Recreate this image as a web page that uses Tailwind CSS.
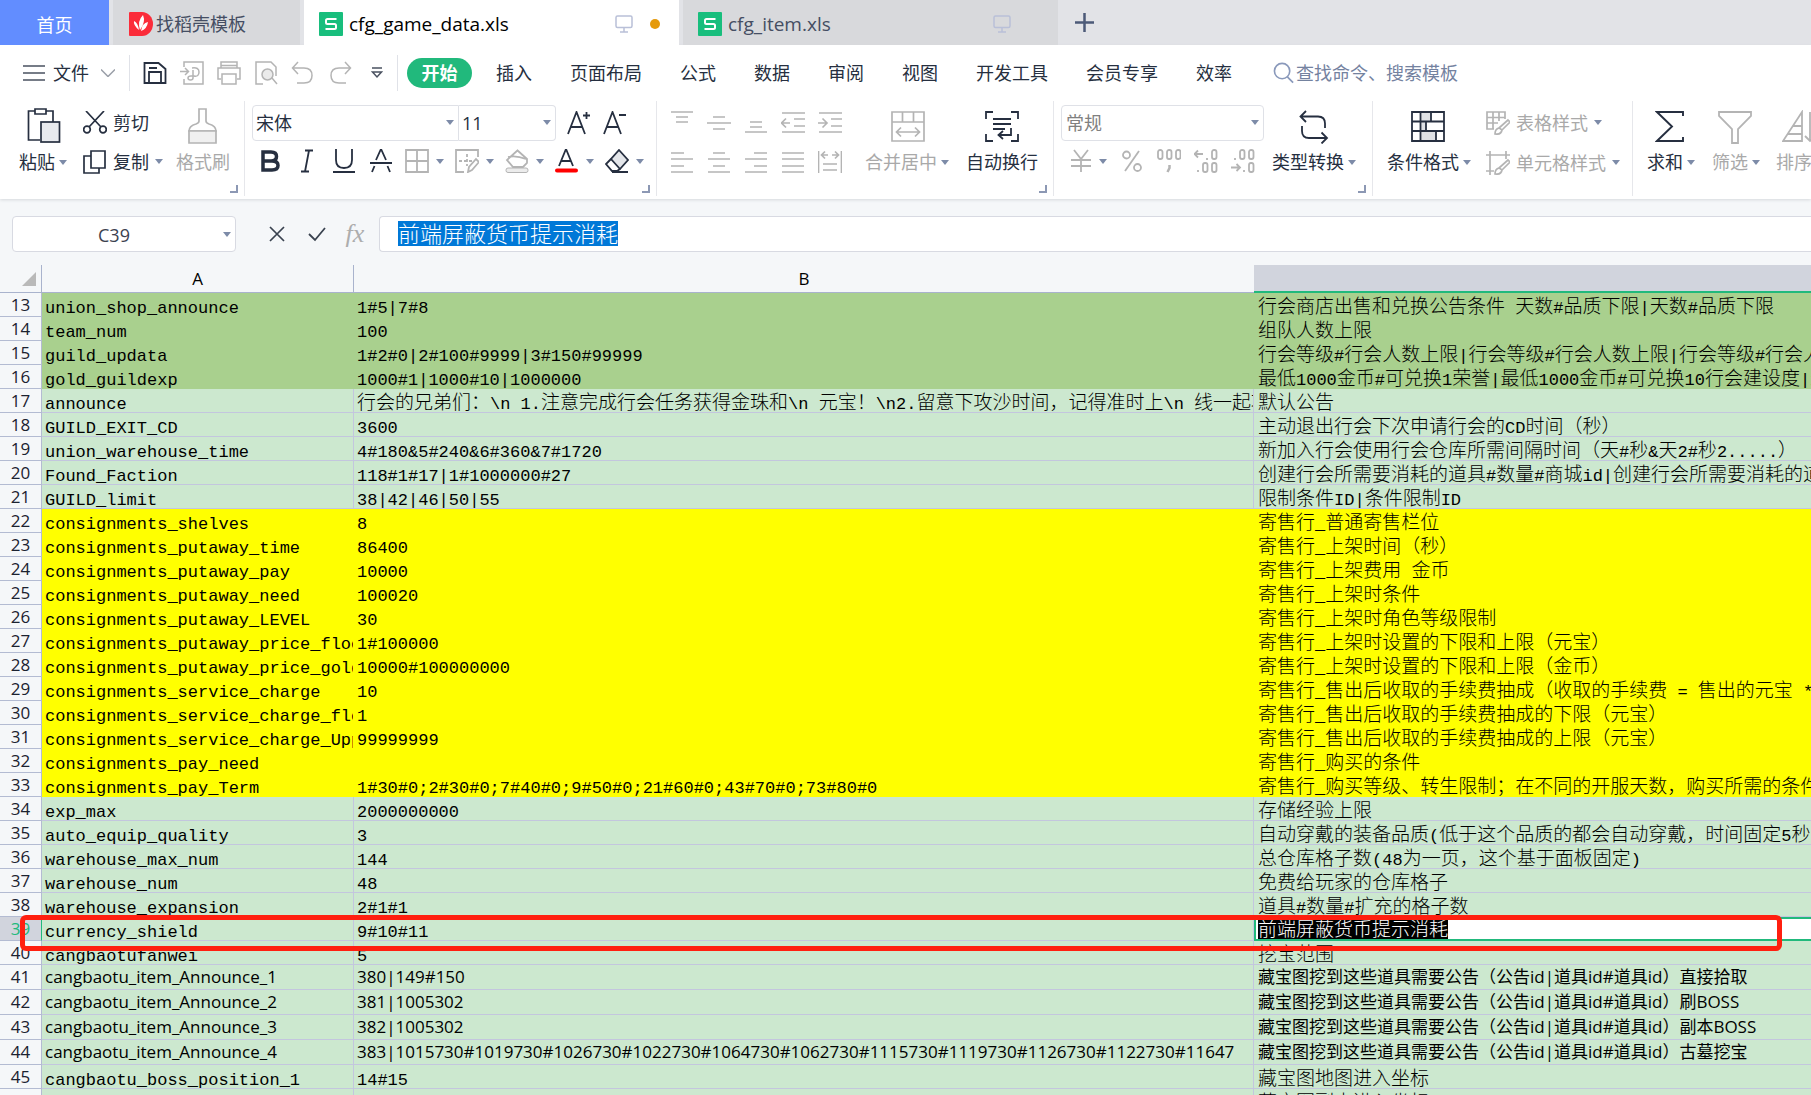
<!DOCTYPE html>
<html lang="zh-CN">
<head>
<meta charset="utf-8">
<title>cfg_game_data.xls</title>
<script src="https://cdn.jsdelivr.net/npm/@tailwindcss/browser@4"></script>
</head>
<body class="h-screen overflow-hidden bg-[#f5f7f9] font-['Open_Sans','Noto_Sans_CJK_SC',sans-serif] text-[18px] leading-6 text-[#262f40]">

<svg class="hidden">
  <symbol id="arrow" viewBox="0 0 8 5"><path d="M0 0h8L4 5z" fill="#7d8ba8"/></symbol>
  <symbol id="corner" viewBox="0 0 8 8"><path d="M7 0v7H0" fill="none" stroke="#8c98b4" stroke-width="2"/></symbol>
  <symbol id="sheet" viewBox="0 0 24 24"><rect width="24" height="24" rx="1" fill="#18be7d"/><path d="M17.500 7H8.500Q7 7 7 8.500v2Q7 12 8.500 12h7q1.500 0 1.500 1.500v2q0 1.500-1.500 1.500H6.500" fill="none" stroke="#fff" stroke-width="2"/></symbol>
  <symbol id="monitor" viewBox="0 0 18 18"><path d="M2.500 1h13q1.500 0 1.500 1.500V11q0 1.500-1.500 1.500h-13Q1 12.500 1 11V2.500Q1 1 2.500 1zM9 12.500V17M5 17h8" fill="none" stroke="#b9c0d8" stroke-width="1.500"/></symbol>
</svg>

<!-- document tabs -->
<header class="flex h-[45px] bg-[#e2e3e7]">
  <button class="w-[109px] pt-1 bg-[#628dff] text-white">首页</button>
  <button class="ml-1 flex w-[187px] items-center gap-[3px] bg-[#d8d9dc] pt-0.5 pl-4 text-[#454e63]">
    <svg class="size-6" viewBox="0 0 24 24"><path d="M1 0h12a11 12 0 0 1 0 24H1q-1 0-1-1V1q0-1 1-1z" fill="#fb2c3a"/><path d="M10 18Q4 13 5 9q4 2 5 9zm1 0Q8 9 14 3q3 7-3 15zm1 1q1-8 7-9-1 7-7 9z" fill="#fff"/></svg>
    <span>找稻壳模板</span>
  </button>
  <button class="ml-1 flex w-[375px] items-center bg-white pt-0.5 pl-[15px] text-black">
    <svg class="size-6"><use href="#sheet"/></svg>
    <span class="ml-1.5 flex-1 text-left text-[19px]">cfg_game_data.xls</span>
    <svg class="size-[18px]"><use href="#monitor"/></svg>
    <span class="mr-[19px] ml-[17px] size-2.5 rounded-full bg-[#e59a0b]"></span>
  </button>
  <button class="ml-1 flex w-[375px] items-center bg-[#d8d9dc] pt-0.5 pl-[15px] text-[#454e63]">
    <svg class="size-6"><use href="#sheet"/></svg>
    <span class="ml-1.5 flex-1 text-left text-[19px]">cfg_item.xls</span>
    <svg class="mr-[47px] size-[18px]"><use href="#monitor"/></svg>
  </button>
  <button class="ml-[17px]" aria-label="新建"><svg class="size-[19px]" viewBox="0 0 19 19"><path d="M9.500 0v19M0 9.500h19" stroke="#4c5a78" stroke-width="2.500"/></svg></button>
</header>

<!-- menu and ribbon -->
<section class="h-[154px] bg-white shadow-[0_1px_3px_#d6d8dc]">
  <nav class="flex h-[56px] items-center whitespace-nowrap">
    <button class="ml-[23px] flex items-center">
      <svg class="h-4 w-[22px]" viewBox="0 0 22 16"><path d="M0 1h22M0 8h22M0 15h22" stroke="#4a5160" stroke-width="1.500"/></svg>
      <span class="ml-2">文件</span>
      <svg class="ml-3 h-2 w-[14px]" viewBox="0 0 14 8"><path d="M0 0.500l7 7 7-7" fill="none" stroke="#9a9fa8" stroke-width="1.500"/></svg>
    </button>
    <div class="ml-[14px] h-9 w-px bg-[#e0e2e8]"></div>
    <div class="ml-1.5 flex fill-none stroke-[#b4b4b4] stroke-[1.5]">
      <button class="flex w-[37px] justify-center" aria-label="保存"><svg class="h-6 w-6 stroke-[#262f40]" viewBox="0 0 24 24"><path d="M1.500 2h14l7 6v14h-21zM6 22V11h12v11M6 7h8" stroke-width="1.800"/></svg></button>
      <button class="flex w-[37px] justify-center" aria-label="输出为PDF"><svg class="h-6 w-6" viewBox="0 0 24 24"><path d="M4 6V1h19v22H4v-5M0 10.500h8M5 7l3.500 3.500L5 14M12 7q7-1 7 4t-5 4h-3q-3 0-3 2t2.500 2 2.500-2V9"/></svg></button>
      <button class="flex w-[37px] justify-center" aria-label="打印"><svg class="h-6 w-6" viewBox="0 0 24 24"><path d="M4 7V1h16v6M4 18H1V7h22v11h-3M5 13h14v10H5zM4 4.500h16"/></svg></button>
      <button class="flex w-[37px] justify-center" aria-label="打印预览"><svg class="h-6 w-6" viewBox="0 0 24 24"><path d="M9 23H2V1h15l5 5v9M18 17l5 6"/><circle cx="13.500" cy="13.500" r="5.500" fill="#ebebeb"/></svg></button>
      <button class="flex w-[37px] justify-center" aria-label="撤销"><svg class="h-6 w-6" viewBox="0 0 24 24"><path d="M7 1L1.500 7 7 13M1.500 7H13q8 0 8 7.500T13 22H6"/></svg></button>
      <button class="flex w-[37px] justify-center" aria-label="恢复"><svg class="h-6 w-6" viewBox="0 0 24 24"><path d="M17 1l5.500 6L17 13M22.500 7H11q-8 0-8 7.500T11 22h7"/></svg></button>
      <button class="flex w-[37px] items-center justify-center" aria-label="更多"><svg class="h-3 w-3 stroke-[#4a5160]" viewBox="0 0 12 12"><path d="M1 1h10M1.500 5l4.500 5 4.500-5z"/></svg></button>
    </div>
    <div class="ml-0.5 h-9 w-px bg-[#e0e2e8]"></div>
    <button class="ml-[9px] h-[30px] w-[65px] rounded-full bg-[#21b97c] font-bold text-white">开始</button>
    <div class="ml-6 flex gap-[38px]">
      <button>插入</button><button>页面布局</button><button>公式</button><button>数据</button><button>审阅</button><button>视图</button><button>开发工具</button><button>会员专享</button><button>效率</button>
    </div>
    <label class="ml-[41px] flex flex-1 items-center gap-0.5">
      <svg class="h-[22px] w-[22px]" viewBox="0 0 22 22"><circle cx="9.500" cy="9" r="8" fill="none" stroke="#8a99bb" stroke-width="1.700"/><path d="M15 15l6 6" stroke="#8a99bb" stroke-width="1.700"/></svg>
      <input class="w-full min-w-0 placeholder:text-[#74829f]" placeholder="查找命令、搜索模板" aria-label="查找命令">
    </label>
  </nav>

  <div class="flex h-[95px] overflow-hidden whitespace-nowrap">
    <!-- clipboard -->
    <div class="relative flex w-[245px] shrink-0 border-r border-[#e6e7eb]">
      <button class="ml-[19px] flex w-[50px] flex-col pt-[7px]">
        <svg class="ml-2 h-9 w-[34px] fill-none stroke-[#262f40] stroke-[1.7]" viewBox="0 0 34 36"><path d="M8 3H1.500v29H13M19 3h7v11M8 1h11v5H8z"/><rect x="14" y="14" width="18.500" height="20" fill="#e8eaee"/></svg>
        <span class="mt-1.5 flex items-center gap-1">粘贴<svg class="h-[5px] w-2"><use href="#arrow"/></svg></span>
      </button>
      <div class="ml-[14px] w-[80px]">
        <button class="mt-2 flex h-[27px] items-center gap-1.5"><svg class="size-6 fill-none stroke-[#262f40] stroke-[1.7]" viewBox="0 0 24 24"><path d="M3 0l15 16M21 0L6 16"/><circle cx="4" cy="18.500" r="3.300"/><circle cx="20" cy="18.500" r="3.300"/></svg>剪切</button>
        <button class="mt-3 flex h-[27px] items-center gap-1.5"><svg class="size-6 fill-none stroke-[#262f40] stroke-[1.7]" viewBox="0 0 24 24"><path d="M8 1h14v17H8zM8 6H1v17h15v-5"/></svg>复制<svg class="h-[5px] w-2 shrink-0"><use href="#arrow"/></svg></button>
      </div>
      <button class="ml-[13px] flex w-[54px] flex-col items-center pt-[7px] text-[#a9a9a9]">
        <svg class="h-9 w-[30px] fill-none stroke-[#b4b4b4] stroke-[1.7]" viewBox="0 0 30 36"><path d="M11 1h7v12q0 2 3 3 7 2 7 7H1q0-5 7-7 3-1 3-3z"/><path d="M1 23h27v12H1z" fill="#f0f0f0"/></svg>
        <span class="mt-1.5">格式刷</span>
      </button>
      <svg class="absolute right-1.5 bottom-[3px] size-2"><use href="#corner"/></svg>
    </div>

    <!-- font -->
    <div class="relative w-[412px] shrink-0 border-r border-[#e6e7eb] pl-[7px]">
      <div class="flex h-[42px] items-center pt-px">
        <label class="flex h-9 w-[207px] items-center rounded-l border border-[#dfe1e7]"><select class="flex-1 appearance-none pl-[3px]" aria-label="字体"><option>宋体</option></select><svg class="mr-1 h-[5px] w-2"><use href="#arrow"/></svg></label>
        <label class="flex h-9 w-[97px] items-center rounded-r border border-l-0 border-[#dfe1e7]"><select class="flex-1 appearance-none pl-[3px]" aria-label="字号"><option>11</option></select><svg class="mr-1 h-[5px] w-2"><use href="#arrow"/></svg></label>
        <button class="ml-[11px]" aria-label="增大字号"><svg class="h-6 w-6 fill-none stroke-[#262f40] stroke-[1.8]" viewBox="0 0 24 24"><path d="M1 23L9.500 1 18 23M4 16h11M16 4.500h7M19.500 1v7"/></svg></button>
        <button class="ml-[12px]" aria-label="减小字号"><svg class="h-6 w-6 fill-none stroke-[#262f40] stroke-[1.8]" viewBox="0 0 24 24"><path d="M1 23L9.500 1 18 23M4 16h11M16 4h7"/></svg></button>
      </div>
      <div class="mt-1.5 flex h-6 items-center fill-none stroke-[#262f40] stroke-[1.8]">
        <button class="flex w-9 justify-center" aria-label="加粗"><svg class="size-6" viewBox="0 0 24 24"><path d="M5 3h8q5.500 0 5.500 4.500T13 12H5zM5 12h9q6 0 6 4.500T14 21H5z" stroke-width="3.500"/></svg></button>
        <button class="flex w-[37px] justify-center" aria-label="倾斜"><svg class="size-6" viewBox="0 0 24 24"><path d="M10 1.500h8M6 22.500h8M14 1.500l-4 21"/></svg></button>
        <button class="flex w-[37px] justify-center" aria-label="下划线"><svg class="size-6" viewBox="0 0 24 24"><path d="M4 0v11q0 8 8 8t8-8V0M1 23h22"/></svg></button>
        <button class="flex w-[37px] justify-center" aria-label="删除线"><svg class="size-6" viewBox="0 0 24 24"><path d="M7 11L12 0l5 11M1 14h22M5.500 17L3 23M18.500 17l2.500 6"/></svg></button>
        <button class="flex w-[50px] items-center gap-[7px] pl-1.5 stroke-[#b4b4b4]" aria-label="边框"><svg class="size-6" viewBox="0 0 24 24"><path d="M1 1h22v22H1zM12 1v22M1 12h22"/></svg><svg class="h-[5px] w-2 stroke-none"><use href="#arrow"/></svg></button>
        <button class="flex w-[50px] items-center gap-[7px] pl-1.5 stroke-[#b4b4b4]" aria-label="绘图边框"><svg class="size-6" viewBox="0 0 24 24"><path d="M23 8V1H1v22h8M13 23l1-5 7-8 3 3-7 8z"/><path d="M12 5v12M4 12h14" stroke-dasharray="3 2"/></svg><svg class="h-[5px] w-2 stroke-none"><use href="#arrow"/></svg></button>
        <button class="flex w-[50px] items-center gap-[7px] pl-1.5 stroke-[#b4b4b4]" aria-label="填充颜色"><svg class="size-6" viewBox="0 0 24 24"><path d="M12 1l10 9v4l-4 4H8l-6-7L13 1M3 8q8-2 18 2"/><rect x="1" y="19" width="22" height="4.500" rx="2" fill="#ececec" stroke-width="1"/></svg><svg class="h-[5px] w-2 stroke-none"><use href="#arrow"/></svg></button>
        <button class="flex w-[50px] items-center gap-[7px] pl-1.5" aria-label="字体颜色"><svg class="size-6" viewBox="0 0 24 24"><path d="M4 17L11 0l7 17M6.500 12h9"/><path d="M2 21.500h19" stroke="#f00" stroke-width="4" stroke-linecap="round"/></svg><svg class="h-[5px] w-2 stroke-none"><use href="#arrow"/></svg></button>
        <button class="flex w-[50px] items-center gap-[7px] pl-1.5" aria-label="清除"><svg class="size-6" viewBox="0 0 24 24"><path d="M14 1l9 10-8 9-9-10z" fill="#e4e6ea"/><path d="M6 10l-5 5 6 7h5l3-2M7 23h16"/></svg><svg class="h-[5px] w-2 stroke-none"><use href="#arrow"/></svg></button>
      </div>
      <svg class="absolute right-1.5 bottom-[3px] size-2"><use href="#corner"/></svg>
    </div>

    <!-- alignment -->
    <div class="relative flex w-[397px] shrink-0 border-r border-[#e6e7eb] pl-1.5">
      <div class="grid w-[185px] grid-cols-5 content-start justify-items-center gap-y-4 fill-none stroke-[#b4b4b4] stroke-[1.7] pt-2">
        <button aria-label="顶端对齐"><svg class="size-6" viewBox="0 0 24 24"><path d="M1 3h22M6 8h12M6 13h12"/></svg></button>
        <button aria-label="垂直居中"><svg class="size-6" viewBox="0 0 24 24"><path d="M6 8h12M0 14h24M6 20h12"/></svg></button>
        <button aria-label="底端对齐"><svg class="size-6" viewBox="0 0 24 24"><path d="M6 13h12M6 18h12M1 23h22"/></svg></button>
        <button aria-label="减少缩进"><svg class="size-6" viewBox="0 0 24 24"><path d="M1 4h23M13 10h11M13 17h11M1 23h23M0 14h9M5 9.500L0.500 14 5 18.500"/></svg></button>
        <button aria-label="增加缩进"><svg class="size-6" viewBox="0 0 24 24"><path d="M1 4h23M13 10h11M13 17h11M1 23h23M0 14h9M4.500 9.500L9 14l-4.500 4.500"/></svg></button>
        <button aria-label="左对齐"><svg class="size-6" viewBox="0 0 24 24"><path d="M1 4h13M1 10h22M1 17h13M1 23h22"/></svg></button>
        <button aria-label="水平居中"><svg class="size-6" viewBox="0 0 24 24"><path d="M6 4h12M1 10h22M6 17h12M1 23h22"/></svg></button>
        <button aria-label="右对齐"><svg class="size-6" viewBox="0 0 24 24"><path d="M10 4h13M1 10h22M10 17h13M1 23h22"/></svg></button>
        <button aria-label="两端对齐"><svg class="size-6" viewBox="0 0 24 24"><path d="M1 4h22M1 10h22M1 17h22M1 23h22"/></svg></button>
        <button aria-label="分散对齐"><svg class="size-6" viewBox="0 0 24 24"><path d="M0.500 2v22M23.500 2v22M5 15h14M5 21h14M4 6h6M14 6h6M7 2.500L3.500 6 7 9.500M17 2.500L20.500 6 17 9.500"/></svg></button>
      </div>
      <button class="ml-[17px] flex w-[86px] flex-col pt-[10px] text-[#a9a9a9]">
        <svg class="ml-[26px] h-[32px] w-[34px] fill-none stroke-[#b4b4b4] stroke-[1.7]" viewBox="0 0 34 32"><path d="M1 1h32v29H1zM1 11h32M11.500 1v10M22.500 1v10M6 21h22M10 16.500L5.500 21l4.500 4.500M24 16.500l4.500 4.500-4.500 4.500"/></svg>
        <span class="mt-[7px] flex items-center gap-1">合并居中<svg class="h-[5px] w-2 shrink-0"><use href="#arrow"/></svg></span>
      </button>
      <button class="ml-[15px] flex w-[72px] flex-col items-center pt-[10px]">
        <svg class="h-[32px] w-[34px] fill-none stroke-[#262f40] stroke-[1.8]" viewBox="0 0 34 32"><path d="M8 1H1v7M26 1h7v7M1 23v7h7M33 23v7h-7M8 8h18M8 13h18M8 18h12M26 17v7H14M18 20l-4.500 4L18 28"/></svg>
        <span class="mt-[7px]">自动换行</span>
      </button>
      <svg class="absolute right-1.5 bottom-[3px] size-2"><use href="#corner"/></svg>
    </div>

    <!-- number format -->
    <div class="relative flex w-[319px] shrink-0 border-r border-[#e6e7eb] pl-[7px]">
      <div>
        <div class="flex h-[42px] items-center pt-px">
          <label class="flex h-9 w-[203px] items-center rounded border border-[#dfe1e7] text-[#808080]"><select class="flex-1 appearance-none pl-1" aria-label="数字格式"><option>常规</option></select><svg class="mr-1 h-[5px] w-2"><use href="#arrow"/></svg></label>
        </div>
        <div class="mt-1.5 ml-1 flex h-6 items-center fill-none stroke-[#b4b4b4] stroke-[1.8]">
          <button class="flex w-12 items-center gap-1.5 pl-1" aria-label="货币"><svg class="size-6" viewBox="0 0 24 24"><path d="M5 1l7 9 7-9M12 10v13M2 11h20M2 17h20"/></svg><svg class="h-[5px] w-2 stroke-none"><use href="#arrow"/></svg></button>
          <button class="flex w-[37px] justify-center" aria-label="百分比"><svg class="size-6" viewBox="0 0 24 24"><circle cx="6.500" cy="6" r="3.500"/><circle cx="17.500" cy="18.500" r="3.500"/><path d="M19 2L5 22"/></svg></button>
          <button class="flex w-[37px] justify-center" aria-label="千位分隔"><svg class="size-6" viewBox="0 0 24 24"><rect x="1" y="1" width="4.500" height="9" rx="2"/><rect x="10" y="1" width="4.500" height="9" rx="2"/><rect x="19" y="1" width="4.500" height="9" rx="2"/><path d="M12.500 16v3l-2 4" stroke-width="2.500"/></svg></button>
          <button class="flex w-[37px] justify-center" aria-label="增加小数位"><svg class="size-6" viewBox="0 0 24 24"><path d="M0 5h9M4 1.500L0.500 5 4 8.500M13 9v2M4 21v2"/><rect x="18" y="1" width="4.500" height="9" rx="2"/><rect x="9" y="14" width="4.500" height="9" rx="2"/><rect x="18" y="14" width="4.500" height="9" rx="2"/></svg></button>
          <button class="flex w-[37px] justify-center" aria-label="减少小数位"><svg class="size-6" viewBox="0 0 24 24"><path d="M0 18.500h9M5.500 15L9 18.500 5.500 22M13 21v2M4 9v2"/><rect x="9" y="1" width="4.500" height="9" rx="2"/><rect x="18" y="1" width="4.500" height="9" rx="2"/><rect x="18" y="14" width="4.500" height="9" rx="2"/></svg></button>
        </div>
      </div>
      <button class="ml-2 flex w-[86px] flex-col pt-[9px]">
        <svg class="ml-6 h-[34px] w-[34px] fill-none stroke-[#262f40] stroke-[1.8]" viewBox="0 0 34 34"><path d="M10 1L4.500 6.500 10 12M4.500 6.500H22q7 0 7 7V18M6 16v5q0 7 7 7h17M25.500 22.500L31 28l-5.500 5.500"/></svg>
        <span class="mt-1.5 flex items-center gap-1">类型转换<svg class="h-[5px] w-2 shrink-0"><use href="#arrow"/></svg></span>
      </button>
      <svg class="absolute right-1.5 bottom-[3px] size-2"><use href="#corner"/></svg>
    </div>

    <!-- styles -->
    <div class="flex w-[260px] shrink-0 border-r border-[#e6e7eb]">
      <button class="ml-[14px] flex w-[86px] flex-col pt-[10px]">
        <svg class="ml-[24px] h-[32px] w-[34px] fill-none stroke-[#262f40] stroke-[1.8]" viewBox="0 0 34 32"><path d="M9 1h11v9H9zM9 11h6v9H9zM9 20h16v10H9z" fill="#dfe1e5" stroke="none"/><path d="M1 1h32v29H1zM1 10.500h32M1 20h32M9.500 1v29M20 1v9.500M15 10.500V20M25 20v10"/></svg>
        <span class="mt-[7px] flex items-center gap-1">条件格式<svg class="h-[5px] w-2 shrink-0"><use href="#arrow"/></svg></span>
      </button>
      <div class="ml-[13px] flex-1 text-[#a9a9a9]">
        <button class="mt-2 flex h-[27px] items-center gap-1.5"><svg class="size-6 fill-none stroke-[#b4b4b4] stroke-[1.7]" viewBox="0 0 24 24"><path d="M8 18H1V1h18v7M1 6.500h18M1 12h11M7 1v17M13 1v9M22 9l2 2-8 8-3-2zM13 17q-4 1-4 6 6 1 7-4"/></svg>表格样式<svg class="h-[5px] w-2 shrink-0"><use href="#arrow"/></svg></button>
        <button class="mt-[13px] flex h-[27px] items-center gap-1.5"><svg class="size-6 fill-none stroke-[#b4b4b4] stroke-[1.7]" viewBox="0 0 24 24"><path d="M0 4h24M4 0v24M20 0v8M0 20h8M22 9l2 2-8 8-3-2zM13 17q-4 1-4 6 6 1 7-4"/></svg>单元格样式<svg class="h-[5px] w-2 shrink-0"><use href="#arrow"/></svg></button>
      </div>
    </div>

    <!-- editing -->
    <div class="flex gap-[15px] pl-[14px]">
      <button class="flex w-[50px] shrink-0 flex-col pt-[9px]">
        <svg class="ml-2 h-[34px] w-[30px] fill-none stroke-[#262f40] stroke-[1.9]" viewBox="0 0 30 34"><path d="M28 6V2H2l15 14.500L2 31h26v-4"/></svg>
        <span class="mt-1.5 flex items-center gap-1">求和<svg class="h-[5px] w-2 shrink-0"><use href="#arrow"/></svg></span>
      </button>
      <button class="flex w-[49px] shrink-0 flex-col pt-[9px] text-[#a9a9a9]">
        <svg class="ml-1.5 h-[34px] w-[34px] fill-none stroke-[#b4b4b4] stroke-[1.8]" viewBox="0 0 34 34"><path d="M1 2h32v4L20 19v14h-6V19L1 6z"/></svg>
        <span class="mt-1.5 flex items-center gap-1">筛选<svg class="h-[5px] w-2 shrink-0"><use href="#arrow"/></svg></span>
      </button>
      <button class="flex w-[50px] shrink-0 flex-col pt-[9px] text-[#a9a9a9]">
        <svg class="ml-1.5 h-[34px] w-[38px] fill-none stroke-[#b4b4b4] stroke-[1.8]" viewBox="0 0 38 34"><path d="M20 2v29H1zM11 16h9M6 24h14M28 2v29M23 26l5 5 5-5"/></svg>
        <span class="mt-1.5 flex items-center gap-1">排序<svg class="h-[5px] w-2 shrink-0"><use href="#arrow"/></svg></span>
      </button>
    </div>
  </div>
</section>

<!-- formula bar -->
<section class="flex h-[66px] items-center pt-1">
  <label class="ml-3 flex h-9 w-[224px] items-center rounded border border-[#d8dae2] bg-white pr-1"><input class="w-full min-w-0 pt-0.5 pr-2 text-center text-[#3c4250]" value="C39" aria-label="名称框"><svg class="h-[5px] w-2 shrink-0"><use href="#arrow"/></svg></label>
  <button class="ml-[33px]" aria-label="取消"><svg class="size-4" viewBox="0 0 16 16"><path d="M1 1l14 14M15 1L1 15" stroke="#39424f" stroke-width="1.700"/></svg></button>
  <button class="ml-[23px]" aria-label="输入"><svg class="h-4 w-[18px]" viewBox="0 0 18 16"><path d="M1 8l6 6L17 2" fill="none" stroke="#39424f" stroke-width="1.800"/></svg></button>
  <button class="ml-[17px] w-[24px] font-['Liberation_Serif',serif] text-[26px] text-[#adadad] italic">fx</button>
  <div class="ml-3 flex h-9 flex-1 items-center rounded-l border border-r-0 border-[#d8dae2] bg-white pl-[18px]" role="textbox" aria-label="编辑栏"><span class="mb-0.5 bg-[#0078d7] text-[22px] leading-[25px] font-light text-white">前端屏蔽货币提示消耗</span></div>
</section>

<!-- sheet -->
<main class="relative">
  <table class="w-full table-fixed border-separate border-spacing-0 text-[17px] text-black">
    <colgroup><col class="w-[42px]"><col class="w-[312px]"><col class="w-[900px]"><col></colgroup>
    <thead>
      <tr>
        <th class="h-7 border-r border-b border-[#a9b3cd] p-0"><svg class="ml-[22px] h-[14px] w-[14px]" viewBox="0 0 14 14"><path d="M14 0v14H0z" fill="#b9b9b9"/></svg></th>
        <th class="h-7 border-r border-b border-[#a9b3cd] p-0 font-normal">A</th>
        <th class="h-7 border-b border-[#a9b3cd] p-0 font-normal">B</th>
        <th class="h-7 border-b-2 border-[#21b97c] bg-[#d1d4dd] p-0" aria-label="C"></th>
      </tr>
    </thead>
    <tbody id="rows"></tbody>
  </table>
  <div class="pointer-events-none absolute top-[650px] right-[29px] left-5 h-9 rounded-md border-5 border-[#ff1f0f]"></div>
</main>

<script>
const rows = [
  [13, 'union_shop_announce', '1#5|7#8', '行会商店出售和兑换公告条件 天数#品质下限|天数#品质下限'],
  [14, 'team_num', '100', '组队人数上限'],
  [15, 'guild_updata', '1#2#0|2#100#9999|3#150#99999', '行会等级#行会人数上限|行会等级#行会人数上限|行会等级#行会人数上限'],
  [16, 'gold_guildexp', '1000#1|1000#10|1000000', '最低1000金币#可兑换1荣誉|最低1000金币#可兑换10行会建设度|最低'],
  [17, 'announce', '行会的兄弟们：\\n 1.注意完成行会任务获得金珠和\\n 元宝！\\n2.留意下攻沙时间，记得准时上\\n 线一起攻', '默认公告'],
  [18, 'GUILD_EXIT_CD', '3600', '主动退出行会下次申请行会的CD时间（秒）'],
  [19, 'union_warehouse_time', '4#180&5#240&6#360&7#1720', '新加入行会使用行会仓库所需间隔时间（天#秒&天2#秒2.....）'],
  [20, 'Found_Faction', '118#1#17|1#1000000#27', '创建行会所需要消耗的道具#数量#商城id|创建行会所需要消耗的道具'],
  [21, 'GUILD_limit', '38|42|46|50|55', '限制条件ID|条件限制ID'],
  [22, 'consignments_shelves', '8', '寄售行_普通寄售栏位'],
  [23, 'consignments_putaway_time', '86400', '寄售行_上架时间（秒）'],
  [24, 'consignments_putaway_pay', '10000', '寄售行_上架费用 金币'],
  [25, 'consignments_putaway_need', '100020', '寄售行_上架时条件'],
  [26, 'consignments_putaway_LEVEL', '30', '寄售行_上架时角色等级限制'],
  [27, 'consignments_putaway_price_floor', '1#100000', '寄售行_上架时设置的下限和上限（元宝）'],
  [28, 'consignments_putaway_price_gold', '10000#100000000', '寄售行_上架时设置的下限和上限（金币）'],
  [29, 'consignments_service_charge', '10', '寄售行_售出后收取的手续费抽成（收取的手续费 = 售出的元宝 *'],
  [30, 'consignments_service_charge_floor', '1', '寄售行_售出后收取的手续费抽成的下限（元宝）'],
  [31, 'consignments_service_charge_Upper', '99999999', '寄售行_售出后收取的手续费抽成的上限（元宝）'],
  [32, 'consignments_pay_need', '', '寄售行_购买的条件'],
  [33, 'consignments_pay_Term', '1#30#0;2#30#0;7#40#0;9#50#0;21#60#0;43#70#0;73#80#0', '寄售行_购买等级、转生限制；在不同的开服天数，购买所需的条件'],
  [34, 'exp_max', '2000000000', '存储经验上限'],
  [35, 'auto_equip_quality', '3', '自动穿戴的装备品质(低于这个品质的都会自动穿戴，时间固定5秒'],
  [36, 'warehouse_max_num', '144', '总仓库格子数(48为一页，这个基于面板固定)'],
  [37, 'warehouse_num', '48', '免费给玩家的仓库格子'],
  [38, 'warehouse_expansion', '2#1#1', '道具#数量#扩充的格子数'],
  [39, 'currency_shield', '9#10#11', '前端屏蔽货币提示消耗'],
  [40, 'cangbaotufanwei', '5', '挖宝范围'],
  [41, 'cangbaotu_item_Announce_1', '380|149#150', '藏宝图挖到这些道具需要公告（公告id|道具id#道具id）直接拾取'],
  [42, 'cangbaotu_item_Announce_2', '381|1005302', '藏宝图挖到这些道具需要公告（公告id|道具id#道具id）刷BOSS'],
  [43, 'cangbaotu_item_Announce_3', '382|1005302', '藏宝图挖到这些道具需要公告（公告id|道具id#道具id）副本BOSS'],
  [44, 'cangbaotu_item_Announce_4', '383|1015730#1019730#1026730#1022730#1064730#1062730#1115730#1119730#1126730#1122730#11647', '藏宝图挖到这些道具需要公告（公告id|道具id#道具id）古墓挖宝'],
  [45, 'cangbaotu_boss_position_1', '14#15', '藏宝图地图进入坐标'],
  [46, '', '', '藏宝图副本进入坐标'],
];
const fills = {
  green: 'border-[#a9d08e] bg-[#a9d08e]',
  yellow: 'border-[#ffff00] bg-[#ffff00]',
  plain: 'border-[#c3c6de] bg-[#cce8cf]',
};
const mono = "font-['Liberation_Mono',monospace] text-[17px]";
const han = "text-[19px] font-light";
const split = t => t.replace(/[\x20-\x7e]+|[^\x20-\x7e]+/g, s =>
  `<span class="${/[\x20-\x7e]/.test(s[0]) ? mono : han}">${s.replace(/&/g, '&amp;')}</span>`);

document.getElementById('rows').innerHTML = rows.map(([n, ...cells]) => {
  const fill = n < 17 ? fills.green : n > 21 && n < 34 ? fills.yellow : fills.plain;
  const sans = n > 40 && n < 45;
  const line = sans ? 'h-6 leading-6' : 'h-[23px] leading-[27px]';
  const head = n === 39 ? 'border-r-[#21b97c] bg-[#d1d4dd] text-[#21b97c]' : 'text-[#1b2230]';
  const tds = cells.map((t, i) => {
    const pad = i === 2 ? 'pl-1' : 'pl-[3px]';
    if (n === 39 && i === 2)
      return `<td class="border-y-2 border-l-2 border-[#21b97c] bg-white p-0"><div class="h-5 overflow-hidden pl-0.5 text-[19px] leading-5 font-light whitespace-nowrap"><span class="bg-black text-white">${t}</span></div></td>`;
    return `<td class="border-b ${i < 2 ? 'border-r' : ''} ${fill} p-0"><div class="${line} ${pad} overflow-hidden whitespace-pre">${sans ? t : split(t)}</div></td>`;
  }).join('');
  return `<tr><th class="border-r border-b border-[#b3bbd2] p-0 font-normal ${head}"><div class="${sans ? 'h-6 leading-6' : 'h-[23px] leading-[23px]'} px-0.5">${n}</div></th>${tds}</tr>`;
}).join('');
</script>
</body>
</html>
